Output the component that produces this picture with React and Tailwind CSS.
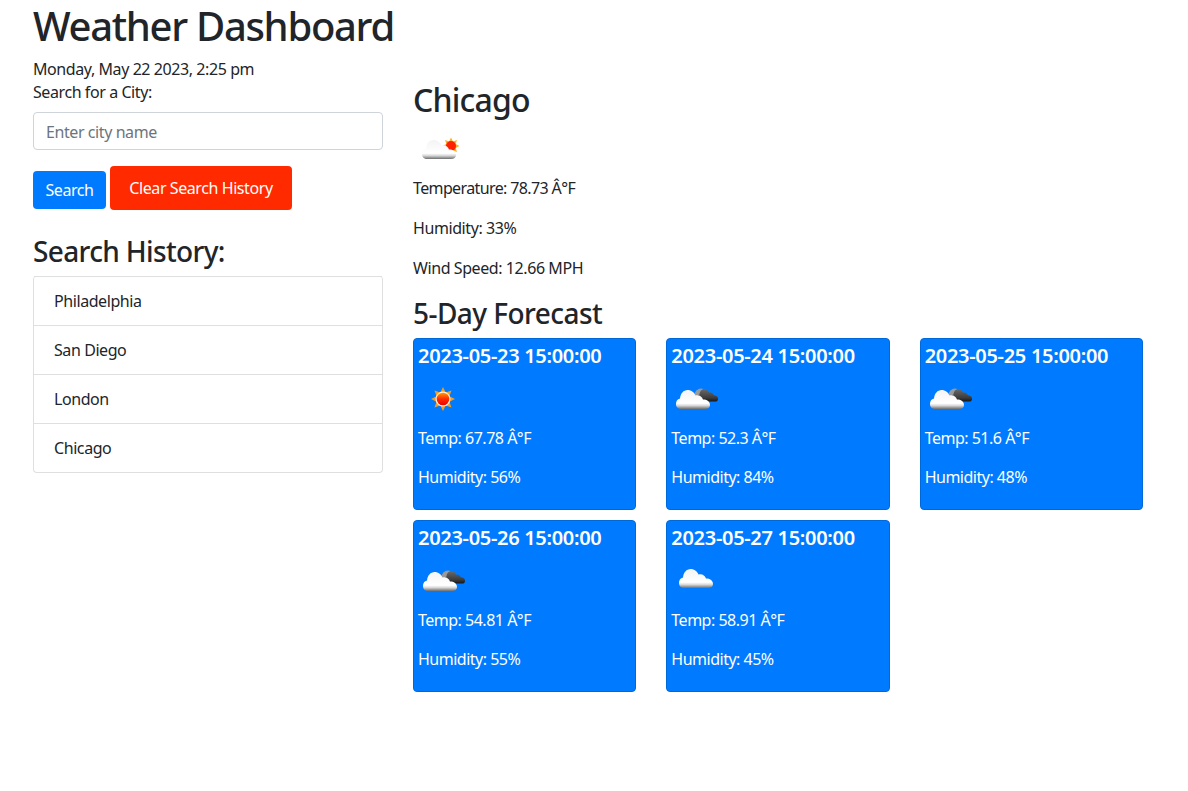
import React from 'react';

const fontFamily = 'font-["Noto_Sans",sans-serif]';

const historyCities = ['Philadelphia', 'San Diego', 'London', 'Chicago'];

const forecast = [
  { date: '2023-05-23 15:00:00', temp: '67.78', humidity: '56', icon: 'sun' },
  { date: '2023-05-24 15:00:00', temp: '52.3', humidity: '84', icon: 'broken' },
  { date: '2023-05-25 15:00:00', temp: '51.6', humidity: '48', icon: 'broken' },
  { date: '2023-05-26 15:00:00', temp: '54.81', humidity: '55', icon: 'broken' },
  { date: '2023-05-27 15:00:00', temp: '58.91', humidity: '45', icon: 'cloud' },
];

const CLOUD_PATH = 'M5 19C1.5 19 0 16.5 0 14C0 11 1.5 9 4 8.5C4.5 3.5 7.5 0 11.5 0C15.5 0 18.5 2.5 19.5 5.5C23 4.5 26 6.5 27 9.5C31 9.5 34 11.5 34 15C34 17.5 32 19 29 19Z';

const Defs = () => (
  <defs>
    <linearGradient id="white-cloud" x1="0" y1="0" x2="0" y2="1">
      <stop offset="0" stopColor="#f4f4f4" />
      <stop offset="0.7" stopColor="#ffffff" />
      <stop offset="0.82" stopColor="#d8d8d8" />
      <stop offset="1" stopColor="#6e6e6e" />
    </linearGradient>
    <linearGradient id="dark-cloud" x1="0" y1="0" x2="0" y2="1">
      <stop offset="0" stopColor="#6a6a6a" />
      <stop offset="0.7" stopColor="#3c3c3c" />
      <stop offset="1" stopColor="#161616" />
    </linearGradient>
    <linearGradient id="sun-core" x1="0" y1="0" x2="0" y2="1">
      <stop offset="0" stopColor="#ff9a00" />
      <stop offset="0.5" stopColor="#ff2a00" />
      <stop offset="1" stopColor="#f00000" />
    </linearGradient>
  </defs>
);

// 8 pointed star behind the sun disc
const Rays = ({ cx, cy, outer, inner, color }) => {
  const points = [];
  for (let i = 0; i < 16; i++) {
    const angle = (i * Math.PI) / 8 - Math.PI / 2;
    const r = i % 2 === 0 ? outer : inner;
    points.push(`${cx + r * Math.cos(angle)},${cy + r * Math.sin(angle)}`);
  }
  return <polygon points={points.join(' ')} fill={color} />;
};

const WeatherIcon = ({ type }) => (
  <svg viewBox="0 0 50 50" className="block w-[50px] h-[50px]">
    <Defs />
    {type === 'sun' && (
      <g>
        <Rays cx={25} cy={24} outer={12} inner={7} color="#f39c1f" />
        <circle cx={25} cy={24} r={7.5} fill="#fff1d8" />
        <circle cx={25} cy={24} r={6.3} fill="url(#sun-core)" />
      </g>
    )}
    {type === 'cloudSun' && (
      <g>
        <Rays cx={38} cy={21} outer={8.5} inner={5} color="#fdb022" />
        <circle cx={38} cy={21} r={5} fill="#ff2000" />
        <path d={CLOUD_PATH} transform="translate(9 15)" fill="url(#white-cloud)" />
      </g>
    )}
    {type === 'broken' && (
      <g>
        <circle cx={30} cy={20} r={6.5} fill="#9a9a9a" />
        <path d={CLOUD_PATH} transform="translate(26 14) scale(0.62 0.66)" fill="url(#dark-cloud)" />
        <path d={CLOUD_PATH} transform="translate(5 15)" fill="url(#white-cloud)" />
      </g>
    )}
    {type === 'cloud' && (
      <path d={CLOUD_PATH} transform="translate(8 12)" fill="url(#white-cloud)" />
    )}
  </svg>
);

const ForecastCard = ({ day }) => (
  <div className="h-[172px] rounded border border-[#0069d9] bg-[#007bff] p-1 tracking-[-0.5px] text-white">
    <h5 className="mt-px mb-[7px] text-[20px] leading-6 font-semibold tracking-[-0.3px]">{day.date}</h5>
    <WeatherIcon type={day.icon} />
    <p className="mt-px mb-[15px] leading-6">Temp: {day.temp} Â°F</p>
    <p className="leading-6">Humidity: {day.humidity}%</p>
  </div>
);

const App = () => {
  return (
    <div className={`min-h-[791px] bg-white px-[33px] text-[16px] tracking-[-0.42px] text-[#212529] ${fontFamily}`}>
      <h1 className="pt-[2px] pb-px text-[40px] leading-[48px] font-medium tracking-[-1.3px]">Weather Dashboard</h1>

      <div className="mt-[6px] flex items-start">
        <div className="w-[350px] shrink-0">
          <div className="leading-6">Monday, May 22 2023, 2:25 pm</div>
          <label className="-mt-px mb-2 block leading-6">Search for a City:</label>
          <input
            type="text"
            placeholder="Enter city name"
            className="h-[38px] w-full rounded border border-[#ced4da] px-3 pt-px placeholder:text-[#6c757d]"
          />
          <div className="mt-4 flex items-end gap-1">
            <button className="mb-px h-[38px] w-[73px] rounded bg-[#007bff] text-white">Search</button>
            <button className="h-[44px] w-[182px] rounded bg-[#ff2a00] text-white">Clear Search History</button>
          </div>
          <h3 className="mt-6 mb-2 text-[28px] leading-[34px] font-medium tracking-[-0.65px]">Search History:</h3>
          <ul className="rounded border-x border-b border-[#dfdfdf]">
            {historyCities.map((city) => (
              <li key={city} className="h-[49px] border-t border-[#dfdfdf] px-5 py-3 leading-6">
                {city}
              </li>
            ))}
          </ul>
        </div>

        <div className="ml-[30px] flex-1 pt-[24px]">
          <h2 className="mb-[6px] text-[32px] leading-[38px] font-medium tracking-[-0.8px]">Chicago</h2>
          <WeatherIcon type="cloudSun" />
          <p className="mt-px mb-4 leading-6 tracking-[-0.62px]">Temperature: 78.73 Â°F</p>
          <p className="mb-4 leading-6">Humidity: 33%</p>
          <p className="mb-[17px] leading-6">Wind Speed: 12.66 MPH</p>
          <h3 className="mb-[8px] text-[28px] leading-[33px] font-medium tracking-[-0.55px]">5-Day Forecast</h3>
          <div className="grid w-[730px] grid-cols-[223.33px_223.33px_223.33px] gap-x-[30px] gap-y-[10px]">
            {forecast.map((day) => (
              <ForecastCard key={day.date} day={day} />
            ))}
          </div>
        </div>
      </div>
    </div>
  );
};

export default App;
